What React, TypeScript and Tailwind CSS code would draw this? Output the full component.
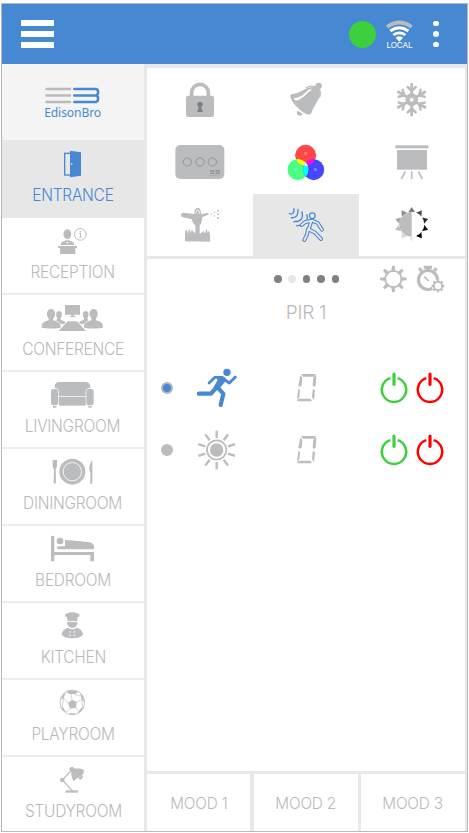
import type { ReactNode } from "react";

const GRAY = "#bbbcbe";
const BLUE = "#4788d2";

type ArtProps = { box: string; w: number; h: number; color?: string; children: ReactNode };

function Art({ box, w, h, color = GRAY, children }: ArtProps) {
  return (
    <svg viewBox={box} width={w} height={h} fill={color} className="block shrink-0 overflow-visible">
      {children}
    </svg>
  );
}

const DoorIcon = () => (
  <Art box="114 45 210 84" w={70} h={28} color={BLUE}>
    <rect x="194" y="55" width="18" height="65" fill="none" stroke={BLUE} strokeWidth="4" />
    <path d="M210 47 243 52V122L210 127Z" />
    <circle cx="215" cy="87" r="2.6" fill="#e7e7e7" />
  </Art>
);

const ReceptionIcon = () => (
  <Art box="114 276 210 84" w={70} h={28}>
    <ellipse cx="202" cy="298" rx="11.5" ry="15" />
    <path d="M182 330c0-9 7-12 14-13l6 9 6-9c8 1 15 4 15 13z" />
    <path d="M195 316h14v6l-7-2-7 2z" />
    <path d="M174 333h57v6h-5v18h-46v-18h-6z" />
    <circle cx="241" cy="298" r="17.5" fill="none" stroke={GRAY} strokeWidth="3" />
    <circle cx="241" cy="290" r="2.5" />
    <path d="M238 295h5v11h2v2h-7v-2h2v-9h-2z" />
  </Art>
);

const Attendees = () => (
  <>
    <ellipse cx="153" cy="72" rx="12.5" ry="15" />
    <path d="M146 82h14v9c13 4 22 6 22 22-8 3-46 3-57 0 0-16 8-18 21-22z" />
    <ellipse cx="177" cy="74" rx="8.5" ry="11" />
    <path d="M172 80h10v9c7 3 13 4 15 10-5 3-10 4-15 3-4-7-9-9-13-10 0-3 1-4 3-5z" />
  </>
);

const ConferenceIcon = () => (
  <Art box="114 42 210 84" w={70} h={28}>
    <path d="M195 45h45v29h-19v4h5v3h-17v-3h5v-4h-19z" />
    <path d="M203 94h28l27 29h-82z" />
    <Attendees />
    <g transform="translate(434 0) scale(-1 1)"><Attendees /></g>
  </Art>
);

const SofaIcon = () => (
  <Art box="114 273 210 84" w={70} h={28}>
    <path d="M164 294v-4q0-14 15-14h77q15 0 15 14v4q-14 0-14 12v13h-80v-13q0-12-13-12z" />
    <rect x="153" y="297" width="22" height="49" rx="7" />
    <rect x="259" y="297" width="22" height="49" rx="7" />
    <rect x="177" y="321" width="80" height="26" />
    <rect x="159" y="348" width="10" height="5" />
    <rect x="265" y="348" width="10" height="5" />
  </Art>
);

const DiningIcon = () => (
  <Art box="114 504 210 84" w={70} h={28}>
    <circle cx="217" cy="545" r="39" />
    <circle cx="217" cy="545" r="27.5" fill="none" stroke="#fff" strokeWidth="2.5" />
    <path d="M158 510h13v19q-1 7-4 8l1 43h-7l1-43q-4-2-4-8z" />
    <path d="M277 509v72h-6v-31q-9-17 6-41z" />
  </Art>
);

const BedIcon = () => (
  <Art box="114 30 210 84" w={70} h={28}>
    <path d="M153 35q0-3 5-3t5 3v46h119v28h-11V90H163v19h-10z" />
    <circle cx="180" cy="48" r="10" />
    <path d="M195 45q2-1 74 7 13 4 13 12v5q0 4-4 4H176q-5 0-5-4.500t5-4.500h19z" />
  </Art>
);

const ChefIcon = () => (
  <Art box="114 261 210 84" w={70} h={28}>
    <path d="M203 289l-2-12c-9-3-7-11 2-12 6-4 21-4 27 0 10 0 12 9 3 12l-2 12q-14-4-28 0z" />
    <path d="M201 292q16-3 32 0c0 8-6 17-16 17s-16-9-16-17z" />
    <path d="M204 308q13 10 26 0c13 3 19 14 19 21-10 14-54 14-64 0 0-7 6-18 19-21z" />
    <g fill="#fff">
      <circle cx="210" cy="321" r="2.500" /><circle cx="223" cy="321" r="2.500" />
      <circle cx="210" cy="331" r="2.500" /><circle cx="223" cy="331" r="2.500" />
    </g>
  </Art>
);

const BallIcon = () => (
  <Art box="114 492 210 84" w={70} h={28}>
    <circle cx="217" cy="532" r="37" fill="none" stroke={GRAY} strokeWidth="2.500" />
    <path d="M204 534l12-10 14 7-2 17-18 3z" />
    <path d="M198 500q18-9 37 0l-10 8-16-1zM181 525l9-18 7-4-6 16zM240 503l9 10 4 20-8-10zM182 545l8 3 8 14-10-5zM246 546l4 2-9 13-9 4zM209 564l15 1 2 4-17-1z" />
    <path d="M216 524l-3-17M230 531l15-8M228 548l10 14M210 551l-12 11M204 534l-14-15M245 523l3 24M225 508l16 5M191 519l-5 28" fill="none" stroke={GRAY} strokeWidth="2" />
  </Art>
);

const LampIcon = () => (
  <Art box="114 723 210 84" w={70} h={28}>
    <path d="M215 735l-28 30 31 33" fill="none" stroke={GRAY} strokeWidth="3.500" />
    <circle cx="187" cy="765" r="7" />
    <rect x="197" y="796" width="37" height="7" />
    <path d="M207 733q2-8 10-8l8 6c12-2 22 0 27 4-1 5-1 9-4 14l-28 19c-3-9-8-18-6-27z" />
    <path d="M235 759l12-8q4 7-3 12-6 2-9-4z" />
  </Art>
);

const LockIcon = () => (
  <Art box="84 48 162 114" w={54} h={38}>
    <path d="M140 96V83a25 25 0 0 1 50 0v13" fill="none" stroke={GRAY} strokeWidth="11" />
    <rect x="123" y="92" width="84" height="64" rx="7" />
    <path d="M165 110a8.500 8.500 0 0 1 4 16l4 15h-16l4-15a8.500 8.500 0 0 1 4-16z" fill="#7e8083" />
  </Art>
);

const BellIcon = () => (
  <Art box="402 48 162 114" w={54} h={38}>
    <path d="M512 66c8 3 12 10 13 18-2 22-14 32-25 57-2 7-6 9-12 7-18-5-45-30-52-52-1-7 3-10 10-10 22-2 36-23 66-20z" />
    <path d="M483 69q12-9 29-4M523 72q6 12 0 26" fill="none" stroke={GRAY} strokeWidth="4" />
    <circle cx="521" cy="63" r="9.500" />
    <path d="M458 137l15 9a9 9 0 1 1-15-9z" />
    <path d="M448 99c14 2 29-11 38-20 6-6 10-7 15-5-15 6-20 24-47 33-5-1-7-4-6-8z" fill="#fff" />
  </Art>
);

const SnowIcon = () => (
  <Art box="234 48 162 114" w={54} h={38}>
    <g fill="none" stroke={GRAY} strokeLinecap="round">
      <circle cx="314" cy="104" r="12.500" strokeWidth="13" />
      {[0, 60, 120, 180, 240, 300].map((a) => (
        <g key={a} transform={`rotate(${a} 314 104)`}>
          <path d="M314 87V58" strokeWidth="8.500" />
          <path d="M302 66l12 12 12-12" strokeWidth="7.500" />
        </g>
      ))}
    </g>
  </Art>
);

const PanelIcon = () => (
  <Art box="84 237 162 114" w={54} h={38}>
    <rect x="91" y="240" width="147" height="102" rx="15" />
    <g fill="none" stroke="#8f9194" strokeWidth="2.800">
      <circle cx="127" cy="291" r="12.500" /><circle cx="165" cy="291" r="12.500" /><circle cx="202" cy="291" r="12.500" />
      <path d="M195 318h13M211 318h14M195 325h13M211 325h14" strokeWidth="4" />
      <path d="M195 332h30" strokeWidth="1.500" strokeDasharray="4 2" />
    </g>
  </Art>
);

const RgbIcon = () => (
  <Art box="402 237 162 114" w={54} h={38}>
    <defs>
      <clipPath id="in-red"><circle cx="482" cy="271" r="31.500" /></clipPath>
      <clipPath id="in-green"><circle cx="459" cy="314" r="31.500" /></clipPath>
    </defs>
    <circle cx="482" cy="271" r="31.500" fill="#ff4749" />
    <circle cx="459" cy="314" r="31.500" fill="#47ff80" />
    <circle cx="506" cy="314" r="31.500" fill="#4747ff" />
    <g clipPath="url(#in-red)">
      <circle cx="459" cy="314" r="31.500" fill="#ff0" />
      <circle cx="506" cy="314" r="31.500" fill="#f0f" />
    </g>
    <g clipPath="url(#in-green)">
      <circle cx="506" cy="314" r="31.500" fill="#0ff" />
      <g clipPath="url(#in-red)"><circle cx="506" cy="314" r="31.500" fill="#fff" /></g>
    </g>
    <g fill="#fff" fillOpacity=".8" fontSize="12" fontFamily="Inter, sans-serif" textAnchor="middle">
      <text x="482" y="269">R</text><text x="454" y="318">G</text><text x="511" y="318">B</text>
    </g>
  </Art>
);

const BoardIcon = () => (
  <Art box="234 237 162 114" w={54} h={38}>
    <rect x="265" y="241" width="99" height="9" />
    <rect x="270" y="255" width="90" height="59" />
    <path d="M295 319l-12 23M314 319v23M334 319l12 23" fill="none" stroke={GRAY} strokeWidth="5" />
  </Art>
);

const SprinklerIcon = () => (
  <Art box="84 51 162 114" w={54} h={38}>
    <path d="M120 154v-29l5-7 4 13 3-16 5 14 3-10 7 8 4 3v-25q-9-3-10-17l-27-6q-6-2-6-8 1-6 7-6l33 4q0-19 10-19t10 19l21-3 3 4-20 9-2 12q-1 8-6 11v27l7-5 5-5 3 9 6-16 3 14 4-8 3 13v21z" />
    <path d="M153 71q-1-11 5-11t5 11" fill="none" stroke="#fff" strokeWidth="2.500" />
    <circle cx="199" cy="73" r="2.200" /><circle cx="208" cy="67" r="2.200" /><circle cx="208" cy="78" r="2.200" />
    <circle cx="219" cy="62" r="2.800" /><circle cx="219" cy="73" r="2.800" /><circle cx="219" cy="84" r="2.800" />
  </Art>
);

const Walker = () => (
  <>
    <path d="M499 94l-8 24" />
    <path d="M501 92l17 7 13 20M498 93l-17 3-11 9" />
    <path d="M491 118l19 10 18 19M490 116l-4 17-8 17" />
  </>
);

const MotionIcon = () => (
  <Art box="402 51 162 114" w={54} h={38} color="none">
    <g strokeLinecap="round" strokeLinejoin="round">
      <path d="M433 71q15 4 14-15M439 83q22 2 20-25M447 95q31 0 24-29M455 107q20 1 30-14 3-10 1-19" stroke={BLUE} strokeWidth="4" />
      <g stroke={BLUE} strokeWidth="12"><Walker /></g>
      <g stroke="#e7e7e7" strokeWidth="5.500"><Walker /></g>
      <circle cx="502" cy="77" r="8.500" stroke={BLUE} strokeWidth="3.500" fill="#e7e7e7" />
    </g>
  </Art>
);

const RAY_SHADES = ["#77787a", "#4a4a4a", "#2c2c2c", "#101010", "#000", "#ececec", "#d6d6d6", "#bbbcbe", "#a5a5a5", "#8a8a8a"];

const BrightnessIcon = () => (
  <Art box="234 51 162 114" w={54} h={38}>
    <path d="M314 66a37 37 0 0 0 0 74z" />
    {RAY_SHADES.map((shade, i) => (
      <path key={shade} d="M314 51l10 16q-10-4-20 0z" fill={shade} transform={`rotate(${i * 36} 314 103)`} />
    ))}
  </Art>
);

const GearIcon = () => (
  <Art box="216 225 84 84" w={28} h={28} color="none">
    <circle cx="259" cy="267" r="24.500" stroke={GRAY} strokeWidth="5.500" />
    {[0, 45, 90, 135, 180, 225, 270, 315].map((a) => (
      <path key={a} d="M253 245l2-18h8l2 18z" fill={GRAY} transform={`rotate(${a} 259 267)`} />
    ))}
  </Art>
);

const TimerIcon = () => (
  <Art box="327 225 84 84" w={28} h={28}>
    <circle cx="363" cy="270" r="28.500" fill="none" stroke={GRAY} strokeWidth="9.500" />
    <path d="M350 227h25v9h-7v6h-11v-6h-7zM333 236l8-4 6 8-8 6zM392 236l-8-4-6 8 8 6z" />
    <path d="M352 260l13 13" stroke={GRAY} strokeWidth="5" />
    <circle cx="393" cy="288" r="19" fill="#fff" />
    <circle cx="393" cy="288" r="12.500" fill="none" stroke={GRAY} strokeWidth="5.500" />
    {[0, 45, 90, 135, 180, 225, 270, 315].map((a) => (
      <rect key={a} x="389.500" y="269" width="7" height="7" transform={`rotate(${a} 393 288)`} />
    ))}
  </Art>
);

const RunnerIcon = () => (
  <Art box="153 36 126 126" w={42} h={42} color={BLUE}>
    <circle cx="246" cy="52" r="11" />
    <path d="M210 63h22q12 3 10 15l-20 25-18-3 14-25z" />
    <g fill="none" stroke={BLUE} strokeLinecap="round" strokeLinejoin="round">
      <path d="M214 67h-4l-18 17" strokeWidth="8" />
      <path d="M239 74l14 10 18-18" strokeWidth="8.500" />
      <path d="M212 100l-14 16h-36" strokeWidth="13" />
      <path d="M218 98l17 18-8 34" strokeWidth="12.500" />
    </g>
  </Art>
);

const SunIcon = () => (
  <Art box="153 221 126 126" w={42} h={42}>
    <circle cx="215" cy="284" r="20" />
    <circle cx="215" cy="284" r="29" fill="none" stroke={GRAY} strokeWidth="5.500" />
    {[0, 36, 72, 108, 144, 180, 216, 252, 288, 324].map((a) => (
      <rect key={a} x="211.500" y="226" width="7" height="22" transform={`rotate(${a} 215 284)`} />
    ))}
  </Art>
);

const SegmentZero = () => (
  <Art box="453 57 66 84" w={22} h={28}>
    <path d="M468 57h45l-5 8h-34zM460 131h36l5 8h-45zM466 61l6 7-2 23-5 5-5-4zM460 101l5 5-2 20-7 8zM514 60l-2 32-5 4-4-5 2-23zM506 101l4 5-3 30-6-9 2-21z" />
  </Art>
);

const PowerIcon = ({ color }: { color: string }) => (
  <Art box="216 48 90 102" w={30} h={34} color="none">
    <path d="M250 69.500a36.500 36.500 0 1 0 22 0" stroke={color} strokeWidth="7.500" />
    <path d="M261 57v31" stroke={color} strokeWidth="9.500" strokeLinecap="round" />
  </Art>
);

const Brand = () => (
  <div className="flex flex-col items-center">
    <svg viewBox="132 261 171 52" width="57" height="17" fill="none" strokeLinecap="round" className="block">
      <path d="M138 267h72M138 287h72M138 307h72" stroke="#bababa" strokeWidth="7.500" />
      <path d="M223 267h66q7 2 7 10t-7 10h-66M289 287q7 2 7 10t-7 10h-66" stroke={BLUE} strokeWidth="7.500" />
    </svg>
    <span className="mt-[-1px] mr-[1px] scale-x-[0.93] font-['Noto_Sans',sans-serif] text-[13px] leading-[18px] font-normal tracking-[-0.1px] text-[#4788d2]">EdisonBro</span>
  </div>
);

const WifiIcon = () => (
  <svg viewBox="198 57 81 66" width="27" height="22" fill="none" className="block overflow-visible">
    <path d="M201 78q37-27 74 0" stroke="#babbbd" strokeWidth="11" />
    <path d="M211 90q27-19 54 0" stroke="#fff" strokeWidth="9" />
    <path d="M220 102q18-13 36 0" stroke="#fff" strokeWidth="8" />
    <path d="M227 110q11-8 22 0l-11 12z" fill="#fff" />
  </svg>
);

const rooms = [
  { name: "RECEPTION", icon: <ReceptionIcon /> },
  { name: "CONFERENCE", icon: <ConferenceIcon /> },
  { name: "LIVINGROOM", icon: <SofaIcon /> },
  { name: "DININGROOM", icon: <DiningIcon /> },
  { name: "BEDROOM", icon: <BedIcon /> },
  { name: "KITCHEN", icon: <ChefIcon /> },
  { name: "PLAYROOM", icon: <BallIcon /> },
  { name: "STUDYROOM", icon: <LampIcon /> },
];

const devices = [
  <LockIcon />, <BellIcon />, <SnowIcon />,
  <PanelIcon />, <RgbIcon />, <BoardIcon />,
  <SprinklerIcon />, <MotionIcon />, <BrightnessIcon />,
];

function RoomLabel({ children }: { children: ReactNode }) {
  return (
    <span className="mt-[7px] scale-x-[0.925] text-[16.800px] leading-[20px] tracking-[-0.3px]">{children}</span>
  );
}

function Mood({ n, edge }: { n: number; edge: string }) {
  return (
    <div className={`flex items-center justify-center border-[#e8e8e8] pt-px ${edge}`}>
      <span className="scale-x-[0.93] text-[16.500px] tracking-[-0.2px]">MOOD {n}</span>
    </div>
  );
}

function SensorRow({ icon, selected }: { icon: ReactNode; selected?: boolean }) {
  return (
    <div className="flex h-[62px] items-center pl-[14px]">
      <span className={`flex size-3 items-center justify-center rounded-full ${selected ? "border-2 border-[#b4b4b4] bg-[#4788d2]" : "bg-[#bbbcbe]"}`} />
      <div className="ml-[23px]">{icon}</div>
      <div className="ml-[58px]"><SegmentZero /></div>
      <div className="ml-[61px] flex gap-[6px]">
        <PowerIcon color="#3cd03c" />
        <PowerIcon color="#ff0000" />
      </div>
    </div>
  );
}

export default function App() {
  return (
    <div className="h-[833px] w-[469px] bg-white pt-[3px] pl-px font-[Inter,sans-serif] font-light text-[#b8b9bb]">
      <div className="flex h-[829px] w-[467px] flex-col overflow-hidden border border-[#b8b8b8]">
        <header className="flex h-[60px] shrink-0 items-center bg-[#4788d2] pl-[19px]">
          <div className="flex flex-col gap-[5px]">
            <span className="h-[5.7px] w-[33px] bg-white" />
            <span className="h-[5.7px] w-[33px] bg-white" />
            <span className="h-[5.7px] w-[33px] bg-white" />
          </div>
          <span className="ml-[294.500px] size-[27px] rounded-full bg-[#3cd03c]" />
          <div className="ml-[9px] flex w-[30px] flex-col items-center">
            <WifiIcon />
            <span className="text-[8.200px] leading-[7px] font-normal tracking-[-0.2px] text-white">LOCAL</span>
          </div>
          <div className="ml-[18.500px] flex flex-col gap-[5px]">
            <span className="size-[5.6px] rounded-full bg-white" />
            <span className="size-[5.6px] rounded-full bg-white" />
            <span className="size-[5.6px] rounded-full bg-white" />
          </div>
        </header>

        <div className="flex min-h-0 flex-1">
          <nav className="w-[142px] shrink-0">
            <div className="flex h-[76px] justify-center bg-[#f4f4f4] pt-[23px]">
              <Brand />
            </div>
            <div className="flex h-[78px] flex-col items-center bg-[#e7e7e7] pt-[10px] text-[#4788d2]">
              <DoorIcon />
              <RoomLabel>ENTRANCE</RoomLabel>
            </div>
            {rooms.map((room) => (
              <div key={room.name} className="flex h-[77px] flex-col items-center border-b-2 border-[#ececec] pt-[9px]">
                {room.icon}
                <RoomLabel>{room.name}</RoomLabel>
              </div>
            ))}
          </nav>

          <main className="flex flex-1 flex-col border-t-4 border-r-2 border-l-[3px] border-[#e8e8e8]">
            <div className="grid grid-cols-3 grid-rows-[63px_63px_62px] border-b-[3px] border-[#e8e8e8]">
              {devices.map((icon, i) => (
                <div key={i} className={`flex justify-center pt-[13px] ${i === 7 ? "bg-[#e7e7e7]" : ""}`}>{icon}</div>
              ))}
            </div>

            <section className="flex-1">
              <div className="flex items-center pt-[6px] pl-[127px]">
                <div className="flex gap-[6.800px]">
                  <span className="size-[7.600px] rounded-full bg-[#808080]" />
                  <span className="size-[7.600px] rounded-full bg-[#e7e7e7]" />
                  <span className="size-[7.600px] rounded-full bg-[#808080]" />
                  <span className="size-[7.600px] rounded-full bg-[#808080]" />
                  <span className="size-[7.600px] rounded-full bg-[#808080]" />
                </div>
                <div className="ml-[40px] flex gap-[9px]">
                  <GearIcon />
                  <TimerIcon />
                </div>
              </div>
              <h1 className="mt-[8px] text-center text-[19px] leading-[24px] tracking-[-0.3px]">PIR 1</h1>
              <div className="pt-[32px]">
                <SensorRow icon={<RunnerIcon />} selected />
                <SensorRow icon={<SunIcon />} />
              </div>
            </section>

            <footer className="grid h-[60px] grid-cols-[107px_107px_1fr] border-t-[3px] border-[#e8e8e8]">
              <Mood n={1} edge="border-r-4" />
              <Mood n={2} edge="border-r-[3px]" />
              <Mood n={3} edge="border-r-0" />
            </footer>
          </main>
        </div>
      </div>
    </div>
  );
}
